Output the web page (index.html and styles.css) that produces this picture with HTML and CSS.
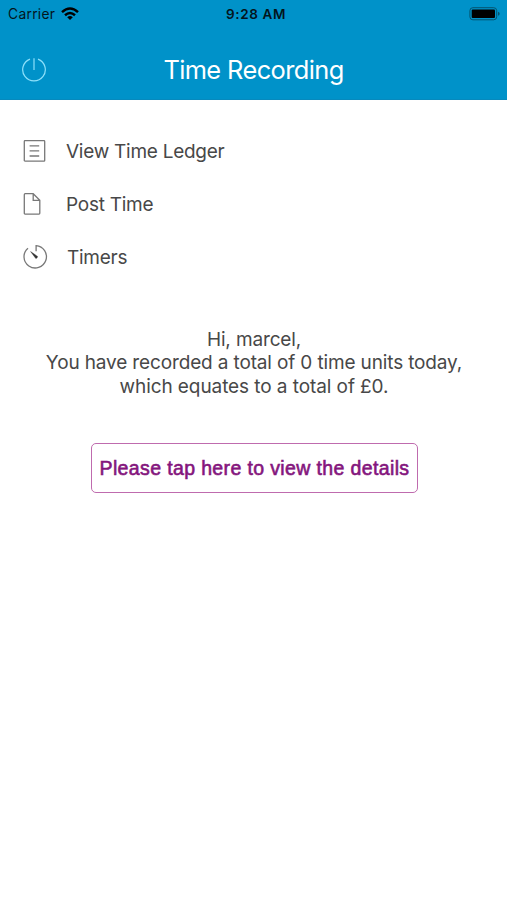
FILE: index.html
```html
<!DOCTYPE html>
<html lang="en">
<head>
<meta charset="utf-8">
<title>Time Recording</title>
<link rel="stylesheet" href="styles.css">
</head>
<body>
<header class="header">
  <div class="status">
    <div class="status-left">
      <span class="carrier">Carrier</span>
      <svg class="wifi" width="18" height="14" viewBox="0 0 18 14" fill="none" stroke="currentColor" stroke-width="2.5"><path d="M1 5.1Q9-2 17 5.1M4 8.2Q9 3.8 14 8.2"/><path d="M6.2 10.2Q9 7.8 11.8 10.2L9 13Z" fill="currentColor" stroke="none"/></svg>
    </div>
    <span class="clock">9:28 AM</span>
    <svg class="battery" width="32" height="14" viewBox="0 0 32 14"><rect x=".9" y=".7" width="26.8" height="12.1" rx="3" fill="none" stroke="#04546f" stroke-width="1"/><rect x="2.7" y="2.5" width="23.3" height="8.6" rx="1" fill="#000"/><path d="M29 4.8Q30.7 5.2 30.7 6.8T29 8.8Z" fill="#04546f"/></svg>
  </div>
  <div class="navbar">
    <svg class="power" width="26" height="26" viewBox="0 0 26 26" fill="none" stroke="currentColor" stroke-width="1.2"><path d="M9 2.1A11.3 11.3 0 1 0 17 2.1M13 1.2V13"/></svg>
    <h1 class="title">Time Recording</h1>
  </div>
</header>
<main>
  <nav class="menu">
    <a class="item"><svg class="icon" width="26" height="26" viewBox="0 0 26 26" fill="none" stroke="currentColor" stroke-width="1.3"><rect x="2.3" y="2.7" width="20.4" height="20.4" rx=".7"/><path d="M7.6 7.8H17.2M7.6 12.9H17.2M7.6 18H17.2"/></svg><span class="label ledger">View Time Ledger</span></a>
    <a class="item"><svg class="icon" width="26" height="26" viewBox="0 0 26 26" fill="none" stroke="currentColor" stroke-width="1.3"><path d="M3.2 2.7H11.2L17.8 9.3V22.3Q17.8 23.1 17 23.1H3.1Q2.3 23.1 2.3 22.3V3.7Q2.3 2.7 3.2 2.7ZM11.2 2.7V9.3H17.8"/></svg><span class="label post">Post Time</span></a>
    <a class="item"><svg class="icon" width="26" height="26" viewBox="0 0 26 26" fill="none" stroke="currentColor" stroke-width="1.3"><path d="M6 4.2A11.2 11.2 0 1 0 14.1 1.6V7.3"/><path d="M8.6 7.6L15.6 12.4Q15.4 14.2 13.8 14.5Z" fill="#333" stroke="#333" stroke-width=".4"/></svg><span class="label timers">Timers</span></a>
  </nav>
  <p class="summary"><span class="line hi">Hi, marcel,</span><span class="line total">You have recorded a total of 0 time units today,</span><span class="line value">which equates to a total of £0.</span></p>
  <button class="details">Please tap here to view the details</button>
</main>
</body>
</html>
```

FILE: styles.css
```css
* { box-sizing: border-box; }
body { margin: 0; background: #fff; color: #484848; font-family: Inter, "Liberation Sans", sans-serif; }
.header { height: 100px; background: #0092c9; border-bottom: 1px solid #0789bd; }
.status { height: 28px; padding: 0 6px 0 8px; display: grid; grid-template-columns: 1fr auto 1fr; align-items: center; color: #04151c; }
.status-left { display: flex; align-items: center; gap: 6px; }
.carrier { font-size: 13.8px; letter-spacing: .3px; }
.wifi { color: #000; margin-top: -1px; }
.clock { font-size: 13.5px; font-weight: 600; letter-spacing: .6px; margin-left: 3px; }
.battery { justify-self: end; }
.navbar { height: 72px; padding: 0 21px; display: grid; grid-template-columns: 26px 1fr 26px; align-items: center; }
.power { color: #8de0fa; margin-top: 11px; }
.title { margin: 11px 0 0; text-align: center; color: #fff; font-size: 25.4px; line-height: 30px; font-weight: 400; letter-spacing: -.6px; }
.menu { display: flex; flex-direction: column; padding: 24px 22px 0; }
.item { height: 53px; display: flex; align-items: center; gap: 18px; color: #484848; }
.icon { color: #787878; }
.label { padding-top: 2px; font-size: 19px; line-height: 24px; letter-spacing: -.26px; }
.timers { margin-left: 1px; }
.summary { margin: 45px 0 0; padding-left: 1px; text-align: center; font-size: 19px; line-height: 23.4px; letter-spacing: -.14px; }
.line { display: block; white-space: nowrap; }
.value { letter-spacing: -.08px; }
.details { display: block; width: 327px; height: 50px; margin: 45px 0 0 91px; padding: 0; border: 1px solid #bf6bae; border-radius: 5px; background: #fff; color: #84157d; font: 400 19.5px "Liberation Sans", sans-serif; letter-spacing: .37px; -webkit-text-stroke: .6px #84157d; white-space: nowrap; }
```
